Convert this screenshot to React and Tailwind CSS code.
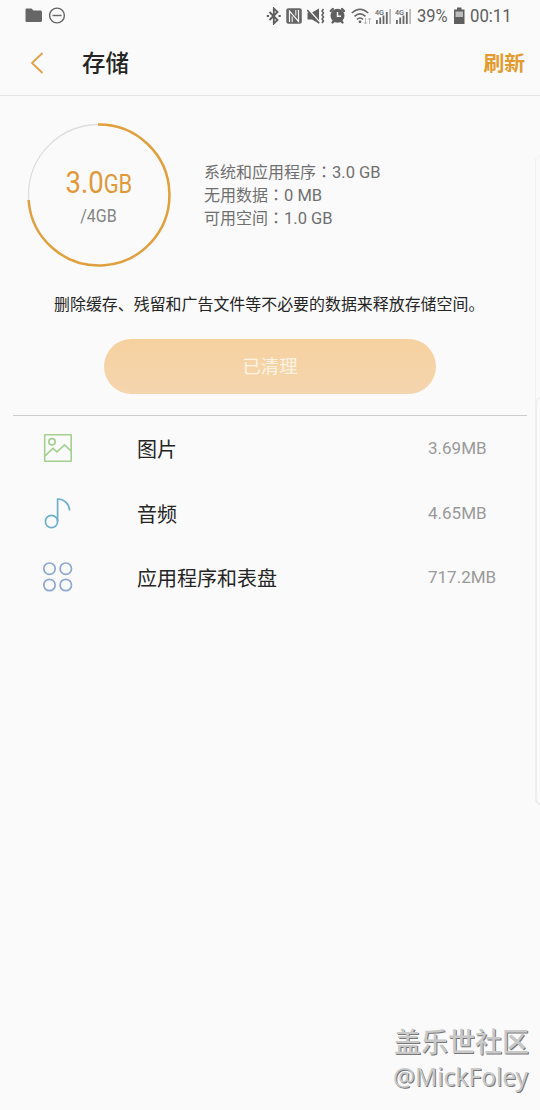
import React from 'react'

const files = [
  { name: '图片', size: '3.69MB', type: 'image' },
  { name: '音频', size: '4.65MB', type: 'audio' },
  { name: '应用程序和表盘', size: '717.2MB', type: 'apps' },
]

const usage = [
  { label: '系统和应用程序', value: '3.0 GB' },
  { label: '无用数据', value: '0 MB' },
  { label: '可用空间', value: '1.0 GB' },
]

const Signal = () => (
  <svg width="16" height="18" viewBox="0 0 16 18" fill="#666">
    <text x="0" y="7.500" fontSize="8" fontWeight="500" fontFamily="Roboto, sans-serif" textLength="9" lengthAdjust="spacingAndGlyphs">4G</text>
    <path d="M1 13h1.800v4H1zM4.300 10.500h1.800V17H4.300zM7.600 8.500h1.800V17H7.600zM10.900 5h1.800v12h-1.800z" />
    <path fill="#bbb" d="M14.200 2H16v15h-1.800z" />
  </svg>
)

const StatusBar = () => (
  <div className="flex h-8 items-center pl-[25px] text-[19px] text-[#5f5f5f]">
    <svg className="-mt-[2px]" width="18" height="16" viewBox="0 0 18 16" fill="#666">
      <path d="M1.500 1.500h5l2 2h7q1.500 0 1.500 1.500v8.500q0 1.500-1.500 1.500h-14Q.5 15 .5 13.500v-11q0-1 1-1z" />
    </svg>
    <svg className="-mt-[2px] ml-[6px]" width="17" height="17" viewBox="0 0 17 17" fill="none" stroke="#666" strokeWidth="1.4">
      <circle cx="8" cy="8.500" r="7.400" />
      <path d="M3.500 8.500h9" />
    </svg>

    {/* bluetooth */}
    <svg className="ml-[200px] -mt-px" width="16" height="18" viewBox="0 0 16 18" fill="none" stroke="#5c5c5c" strokeWidth="1.8">
      <path d="M3.500 5l8 8-3.700 3.500v-15L11.500 5l-8 8" />
      <path d="M.8 9h2.200M12.500 9h2.200" />
    </svg>
    {/* nfc */}
    <svg className="-mt-px ml-[4px]" width="17" height="18" viewBox="0 0 17 18">
      <rect x=".3" y="1.300" width="15.500" height="15.500" rx="2" fill="#666" />
      <path d="M3.500 15V4l9 10.500V3" fill="none" stroke="#fafafa" strokeWidth="1.200" />
      <path d="M6.200 15V9.500M9.800 8.500V3" fill="none" stroke="#fafafa" strokeWidth="1" />
    </svg>
    {/* mute + vibrate */}
    <svg className="-mt-px ml-[4px]" width="18" height="18" viewBox="0 0 18 18" fill="#5f5f5f">
      <path d="M.5 5.500H5L12 1.500v15L5 12.500H.5z" />
      <path d="M1 2l12 13.500" stroke="#fafafa" strokeWidth="1.800" />
      <path d="M.2 3l12 13.300" stroke="#5f5f5f" strokeWidth="1.500" />
      <path d="M16.500 2l-1.500 2 1.500 2L15 8l1.500 2-1.500 2 1.500 2-1.500 2" fill="none" stroke="#5f5f5f" strokeWidth="1.500" />
    </svg>
    {/* alarm */}
    <svg className="-mt-px ml-[4px]" width="17" height="18" viewBox="0 0 17 18">
      <g stroke="#5f5f5f" strokeWidth="2.400" strokeLinecap="round">
        <path d="M1.800 4l2-2M15 4l-2-2M3.500 15.500l2-2M13.500 15.500l-2-2" />
      </g>
      <circle cx="8.500" cy="8.800" r="7" fill="#5f5f5f" />
      <path d="M8.500 5v4.300H12" fill="none" stroke="#fafafa" strokeWidth="1.400" />
    </svg>
    {/* wifi */}
    <svg className="-mt-px ml-[5px]" width="22" height="18" viewBox="0 0 22 18" fill="none" stroke="#666" strokeWidth="1.600">
      <path d="M.8 6q8.200-7.500 16.400 0M3.500 9.300q5.500-5 11 0M6 12.300q3-2.600 6 0" />
      <circle cx="9" cy="14.800" r="1.400" fill="#666" stroke="none" />
      <path d="M14.500 11v6M13 15.300l1.500 1.700 1.500-1.700M18.500 17v-6M17 12.700l1.500-1.700 1.500 1.700" stroke="#b5b5b5" strokeWidth="1" />
    </svg>
    <div className="-mt-px ml-[2px] flex gap-1">
      <Signal />
      <Signal />
    </div>
    <div className="ml-[6px] w-[37px]">
      <span className="block w-max origin-left scale-x-[0.87]">39%</span>
    </div>
    <svg className="-mt-px" width="11" height="18" viewBox="0 0 11 18">
      <path d="M3 .5h4.500V2.500H10.500v14.500H0V2.500h3z" fill="#5f5f5f" />
      <path d="M1.500 4.500H9V10H1.500z" fill="#bcbcbc" />
    </svg>
    <span className="ml-[5px] block w-max origin-left scale-x-[0.88]">00:11</span>
  </div>
)

const FileIcon = ({ type }) => {
  if (type === 'image') {
    return (
      <svg width="30" height="30" viewBox="0 0 30 30" fill="none" stroke="#a3cf91" strokeWidth="1.600">
        <rect x="1.700" y="1.700" width="26.500" height="26.500" rx=".5" />
        <circle cx="9" cy="8.800" r="3.200" />
        <path d="M2 22.800l8-7.500 4 3.500 7.500-7 6.500 6" />
      </svg>
    )
  }
  if (type === 'audio') {
    return (
      <svg width="30" height="32" viewBox="0 0 30 32" fill="none" stroke="#6fafcb" strokeWidth="1.700">
        <circle cx="8.500" cy="24.500" r="6.100" />
        <path d="M14.600 24.500V2c6.500 0 11.500 4.500 12 11.500" />
      </svg>
    )
  }
  return (
    <svg width="30" height="30" viewBox="0 0 30 30" fill="none" stroke="#8ea6d4" strokeWidth="1.700">
      <circle cx="6.500" cy="6.700" r="5.700" />
      <circle cx="22.800" cy="6.700" r="5.700" />
      <circle cx="6.500" cy="23" r="5.700" />
      <circle cx="22.800" cy="23" r="5.700" />
    </svg>
  )
}

const App = () => {
  return (
    <div className="relative h-[1110px] w-[540px] overflow-hidden bg-[#fafafa] font-[Roboto,'Noto_Sans_CJK_SC',sans-serif] text-[#252525]">
      <StatusBar />

      {/* Header */}
      <header className="flex h-16 items-center border-b-[1.5px] border-[#e4e4e4] pr-[15px] pl-[30px]">
        <svg className="-mt-px" width="14" height="22" viewBox="0 0 14 22" fill="none" stroke="#e2a043" strokeWidth="1.800">
          <path d="M12.500 1L2 11l10.500 10" />
        </svg>
        <h1 className="ml-[38px] pt-[3px] text-[23.500px] font-medium">存储</h1>
        <button className="ml-auto pt-[3px] text-[20.800px] font-bold text-[#e39a2f]">刷新</button>
      </header>

      {/* Usage */}
      <section className="flex h-[194px] items-center pt-[3px] pl-[26px]">
        <div className="relative h-[146px] w-[146px]">
          <svg width="146" height="146" viewBox="0 0 146 146" fill="none">
            <circle cx="73" cy="73" r="70.500" stroke="#dedede" strokeWidth="1.300" />
            <path d="M72 2.500A70.500 70.500 0 1 1 2.600 78" stroke="#e1a03e" strokeWidth="2.500" />
          </svg>
          <div className="absolute inset-0 flex flex-col items-center pt-[42px]">
            <p className="scale-x-[0.86] text-[32px] leading-9 whitespace-nowrap text-[#e0993a]">
              3.0<span className="text-[25.500px]">GB</span>
            </p>
            <p className="mt-[2px] scale-x-[0.89] text-[18px] leading-6 text-[#858585]">/4GB</p>
          </div>
        </div>
        <div className="ml-8 text-[16px] leading-[23px] text-[#707070]">
          {usage.map((item) => (
            <p key={item.label} className="h-[23px]">
              {item.label}
              <span className="font-['Noto_Sans_CJK_TC']">：</span>
              <span className="text-[16.500px]">{item.value}</span>
            </p>
          ))}
        </div>
      </section>

      <p className="pt-px pl-[54px] text-[15.950px] leading-7 whitespace-nowrap">
        删除缓存、残留和广告文件等不必要的数据来释放存储空间。
      </p>
      <button className="mt-[20px] ml-[104px] block h-[55px] w-[332px] rounded-full bg-linear-to-b from-[#f6d1a0] to-[#f5d5ae] pt-px text-[18.300px] text-[#fff4e4]">
        已清理
      </button>

      {/* File list */}
      <ul className="mx-[13px] mt-[21px] border-t border-[#cdcdcd]">
        {files.map((file) => (
          <li key={file.type} className="flex h-[64.500px] items-center pl-[30px]">
            <FileIcon type={file.type} />
            <span className="ml-[64px] w-[291px] pt-1 text-[20px]">{file.name}</span>
            <span className="pt-px text-[17px] text-[#999]">{file.size}</span>
          </li>
        ))}
      </ul>

      {/* Edge panel handles */}
      <div className="absolute top-[155px] left-[535px] h-[650px] w-4 rounded-l-md border border-[#f0f0f0]"></div>
      <div className="absolute top-[397px] left-[535px] h-[408px] w-4 rounded-l-md border-2 border-[#eeeeee]"></div>

      {/* Watermark */}
      <div className="absolute top-[1023px] left-[394px] whitespace-nowrap text-[#c9c9c9] [text-shadow:1px_1px_0_#777]">
        <p className="text-[27px] leading-10 font-medium">盖乐世社区</p>
        <p className="-ml-px -mt-px font-['Noto_Sans'] text-[24.500px] leading-[30px]">@MickFoley</p>
      </div>
    </div>
  )
}

export default App
